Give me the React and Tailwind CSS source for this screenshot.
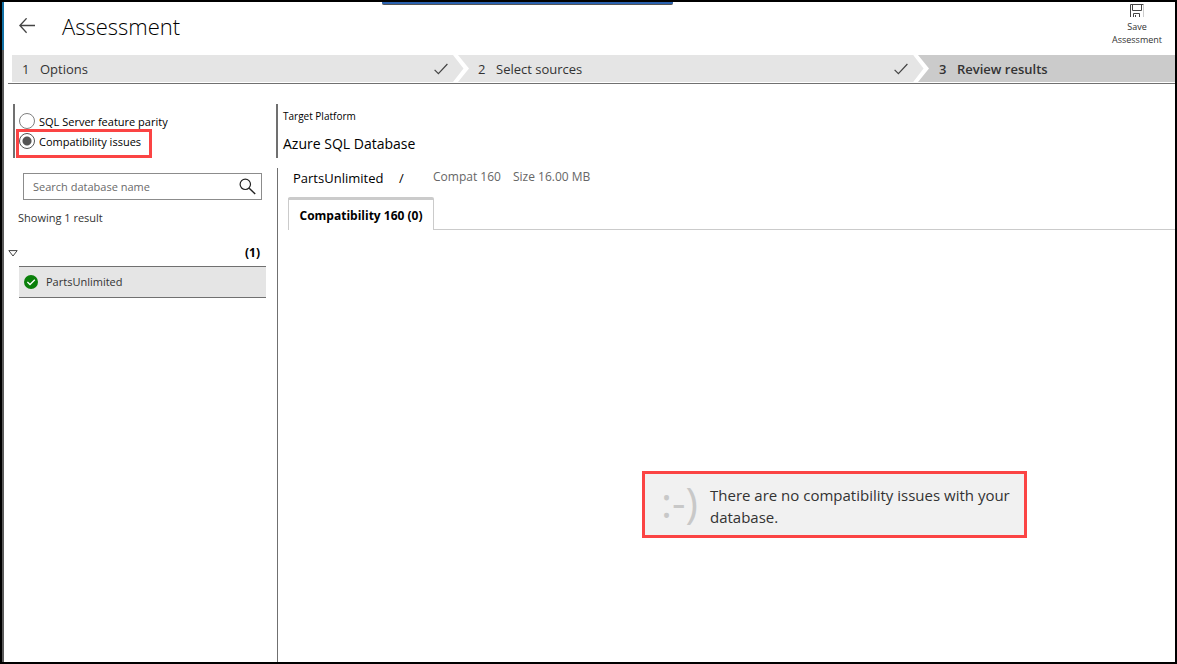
import React, { useState } from "react";

function BackIcon() {
  return (
    <svg width="16" height="16" viewBox="0 0 16 16" fill="none" stroke="#444" strokeWidth="1.3" aria-hidden="true">
      <path d="M16 7.5H1M7.6 0.3L0.9 7.5l6.7 7.2" />
    </svg>
  );
}

function SaveIcon() {
  return (
    <svg width="14" height="14" viewBox="0 0 14 14" fill="none" stroke="#444" aria-hidden="true">
      <path d="M0.5 13V0.5H13.5" />
      <path d="M13.5 1V13" stroke="#ccc" />
      <path d="M2.5 0.5V6.5H11.5V0.5" />
      <path d="M3.5 13V9.5H9.5V13M5.5 13V11" />
    </svg>
  );
}

function StepCheck() {
  return (
    <svg width="14" height="12" viewBox="0 0 14 12" fill="none" stroke="#444" strokeWidth="1.2" aria-hidden="true">
      <path d="M0.6 6.8L4.4 10.6L13.4 1" />
    </svg>
  );
}

function StepArrow({ before }) {
  return (
    <svg width="16" height="27" viewBox="0 0 16 27" className="shrink-0" aria-hidden="true">
      <path d="M0 0L11 13.5L0 27Z" fill={before} />
      <path d="M0 0H5L16 13.5L5 27H0L10.5 13.5Z" fill="#fff" />
    </svg>
  );
}

function SearchIcon() {
  return (
    <svg width="17" height="17" viewBox="0 0 17 17" fill="none" stroke="#222" aria-hidden="true">
      <circle cx="6.3" cy="6.3" r="5.2" strokeWidth="1.2" />
      <path d="M10.2 10.2L16.2 16" strokeWidth="1.4" />
    </svg>
  );
}

function OkIcon() {
  return (
    <svg width="14" height="14" viewBox="0 0 14 14" className="shrink-0" aria-hidden="true">
      <circle cx="7" cy="7" r="7" fill="#0b800b" />
      <path d="M3.4 7L6 9.5L10.8 4.8" fill="none" stroke="#fff" strokeWidth="1.3" />
    </svg>
  );
}

const radioClass =
  "m-0 size-4 shrink-0 appearance-none rounded-full border border-[#808080] bg-white checked:border-[#555] checked:bg-[radial-gradient(circle,#555_4px,#fff_5px)]";

export default function App() {
  const [view, setView] = useState("compat");
  return (
    <div className="flex min-h-screen border-2 border-black bg-white font-['Open_Sans','Noto_Sans',sans-serif] text-[#333]">
      <div className="flex w-0.5 shrink-0 flex-col bg-[#5a5a5a]">
        <div className="h-12 bg-[#1271a6]" />
      </div>
      <div className="flex min-w-0 grow flex-col">
        <header className="relative flex h-[53px] items-start pr-[10px] pl-[15px]">
          <div className="absolute top-0 left-[378px] h-[3px] w-[291px] rounded-b-xs border-b border-[#555] bg-[#2a62b0]" />
          <button type="button" aria-label="Back" className="mt-4">
            <BackIcon />
          </button>
          <h1 className="mt-2 ml-[27px] text-[22px] leading-8 font-light text-black">Assessment</h1>
          <button type="button" className="mt-0.5 ml-auto flex w-14 flex-col items-center text-[9px] leading-[13px]">
            <SaveIcon />
            <span className="mt-0.5">Save Assessment</span>
          </button>
        </header>

        <nav aria-label="Assessment steps" className="ml-1 border-b border-[#707070] pb-px pl-1">
          <ol className="grid grid-cols-[441fr_460fr_262fr] text-[13px] leading-5">
            <li className="flex h-[27px] items-center bg-[#e5e5e5] pr-[5px] pl-[10px]">
              <span className="w-[18px] pt-px">1</span>
              <span className="grow pt-px">Options</span>
              <StepCheck />
            </li>
            <li className="flex h-[27px] items-center bg-[#e5e5e5] pr-[5px]">
              <StepArrow before="#e5e5e5" />
              <span className="ml-[9px] w-[18px] pt-px">2</span>
              <span className="grow pt-px">Select sources</span>
              <StepCheck />
            </li>
            <li className="flex h-[27px] items-center bg-[#cbcbcb] font-semibold" aria-current="step">
              <StepArrow before="#e5e5e5" />
              <span className="ml-[10px] w-[18px] pt-px">3</span>
              <span className="pt-px">Review results</span>
            </li>
          </ol>
        </nav>

        <div className="flex grow pt-5">
          <aside className="w-[272px] shrink-0 pl-1 text-[11px]">
            <fieldset className="ml-[5px] h-[54px] border-l-2 border-[#707070] pt-[9px] pl-px text-black">
              <label className="flex h-4 items-center gap-1 pl-[3px] leading-4">
                <input type="radio" name="view" className={radioClass} checked={view === "parity"} onChange={() => setView("parity")} />
                <span className="pt-px">SQL Server feature parity</span>
              </label>
              <label className="flex h-[29px] w-[136px] items-start gap-1 border-3 border-[#fb4444] pt-px leading-4 whitespace-nowrap">
                <input type="radio" name="view" className={radioClass} checked={view === "compat"} onChange={() => setView("compat")} />
                <span className="pt-px">Compatibility issues</span>
              </label>
            </fieldset>

            <div className="mt-[15px] mr-[14px] ml-[15px] flex h-[27px] items-center border border-[#8c8c8c] pr-[5px] pl-[9px]">
              <input type="text" aria-label="Search database name" placeholder="Search database name" className="min-w-0 grow pt-px outline-none placeholder:text-[#6a6a6a]" />
              <button type="button" aria-label="Search">
                <SearchIcon />
              </button>
            </div>
            <p className="mt-[10px] ml-[10px] leading-4">Showing 1 result</p>

            <button type="button" aria-label="Toggle group" aria-expanded="true" className="mt-[19px] flex h-4 w-full items-center justify-between pr-4">
              <svg width="10" height="7" viewBox="0 0 10 7" fill="#fff" stroke="#444" aria-hidden="true">
                <path d="M0.8 0.6H9.2L5 6Z" />
              </svg>
              <span className="text-xs font-bold text-black">(1)</span>
            </button>
            <ul className="mt-[5px] mr-[10px] ml-[11px]">
              <li className="flex h-8 items-center gap-2 border-y border-[#707070] bg-[#e5e5e5] pl-[5px]">
                <OkIcon />
                <span className="pt-px">PartsUnlimited</span>
              </li>
            </ul>
          </aside>

          <main className="flex min-w-0 grow flex-col">
            <section className="h-[54px] border-l-2 border-[#707070] pt-1 pl-[5px] text-black">
              <p className="text-[10px] leading-4">Target Platform</p>
              <p className="mt-[10px] text-sm leading-5">Azure SQL Database</p>
            </section>
            <section className="mt-[10px] ml-px flex grow flex-col border-l border-[#707070]">
              <div className="flex h-[29px] items-start pl-[15px] text-xs leading-[18px] text-[#666]">
                <h2 className="w-[106px] text-[13px] leading-5 text-black">PartsUnlimited</h2>
                <span className="w-[34px] text-[13px] leading-5 text-black">/</span>
                <span className="w-20">Compat 160</span>
                <span>Size 16.00 MB</span>
              </div>
              <div role="tablist" className="flex pl-[10px]">
                <button type="button" role="tab" aria-selected="true" className="h-[33px] w-[146px] rounded-t-xs border-x border-t-3 border-[#cbcbcb] pt-px text-xs font-bold whitespace-nowrap text-black">
                  Compatibility 160 (0)
                </button>
                <div className="grow border-b border-[#cbcbcb]" />
              </div>
              <div role="tabpanel" className="flex justify-end pt-[241px] pr-[148px]">
                <div className="flex h-[67px] w-[385px] items-center border-3 border-[#fb4444] bg-[#f1f1f1] pl-4">
                  <span className="w-[49px] shrink-0 pb-1.5 text-[42px] leading-[54px] text-[#c8c8c8]">:-)</span>
                  <p className="pt-0.5 text-[15px] leading-[22px]">There are no compatibility issues with your database.</p>
                </div>
              </div>
            </section>
          </main>
        </div>
      </div>
    </div>
  );
}
